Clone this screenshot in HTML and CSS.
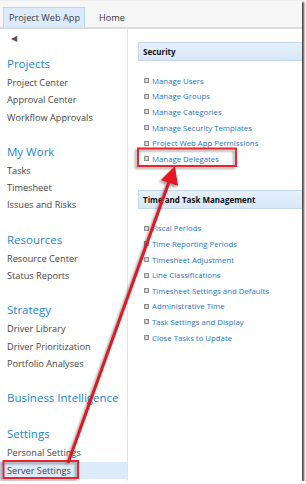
FILE: index.html
```html
<!DOCTYPE html>
<html>
<head lang="en">
	<meta charset="utf-8">
	<title>Project Web App - Server Settings</title>
	<link rel="stylesheet" href="styles.css">
</head>
<body>

	<div class="frame">
		<section class="topbar">
			<span class="tab active">Project Web App</span>
			<span class="tab">Home</span>
		</section>

		<div class="main">
			<nav class="quick">
				<div class="back">&#9664;</div>

				<div class="group">
					<p class="heading">Projects</p>
					<p class="item">Project Center</p>
					<p class="item">Approval Center</p>
					<p class="item">Workflow Approvals</p>
				</div>

				<div class="group">
					<p class="heading">My Work</p>
					<p class="item">Tasks</p>
					<p class="item">Timesheet</p>
					<p class="item">Issues and Risks</p>
				</div>

				<div class="group">
					<p class="heading">Resources</p>
					<p class="item">Resource Center</p>
					<p class="item">Status Reports</p>
				</div>

				<div class="group">
					<p class="heading">Strategy</p>
					<p class="item">Driver Library</p>
					<p class="item">Driver Prioritization</p>
					<p class="item">Portfolio Analyses</p>
				</div>

				<div class="group">
					<p class="heading">Business Intelligence</p>
				</div>

				<div class="group">
					<p class="heading">Settings</p>
					<p class="item">Personal Settings</p>
					<p class="item selected">Server Settings</p>
				</div>
			</nav>

			<section class="content">
				<div class="block">
					<h3 class="block-title">Security</h3>
					<ul class="links">
						<li><a>Manage Users</a></li>
						<li><a>Manage Groups</a></li>
						<li><a>Manage Categories</a></li>
						<li><a>Manage Security Templates</a></li>
						<li><a>Project Web App Permissions</a></li>
						<li><a>Manage Delegates</a></li>
					</ul>
				</div>

				<div class="block">
					<h3 class="block-title">Time and Task Management</h3>
					<ul class="links">
						<li><a>Fiscal Periods</a></li>
						<li><a>Time Reporting Periods</a></li>
						<li><a>Timesheet Adjustment</a></li>
						<li><a>Line Classifications</a></li>
						<li><a>Timesheet Settings and Defaults</a></li>
						<li><a>Administrative Time</a></li>
						<li><a>Task Settings and Display</a></li>
						<li><a>Close Tasks to Update</a></li>
					</ul>
				</div>
			</section>
		</div>

		<!-- callout drawn over the screenshot -->
		<svg class="callout" width="302" height="481" viewBox="0 0 302 481">
			<rect x="138" y="148.5" width="98" height="17.5" fill="none" stroke="#e8262c" stroke-width="2"/>
			<rect x="3.5" y="461" width="74.5" height="17" fill="none" stroke="#e8262c" stroke-width="2"/>
			<line x1="68" y1="463" x2="169" y2="182" stroke="#e8161e" stroke-width="3"/>
			<polygon points="175,166 178,186 161,180" fill="#e8161e"/>
		</svg>
	</div>

</body>
</html>
```

FILE: styles.css
```css
* {
	margin: 0;
	padding: 0;
}

body {
	font-family: "Open Sans", "Liberation Sans", sans-serif;
	background: #fff;
}

.frame {
	position: relative;
	width: 302px;
	height: 481px;
	overflow: hidden;
	background: #fff;
	box-shadow: 2px 2px 2px rgba(0, 0, 0, 0.75);
}

/* ribbon strip with the two tabs */
.topbar {
	display: flex;
	align-items: flex-end;
	gap: 6px;
	height: 21px;
	padding: 5px 0 0 3px;
	background: #f6f6f6;
	border-top: 1px solid #ececec;
	border-bottom: 2px solid #dcdcdc;
}

.tab {
	display: flex;
	align-items: center;
	height: 19px;
	padding: 0 8px;
	font-size: 9.2px;
	color: #3b3b3b;
}

.tab.active {
	padding: 0 4px 0 5px;
	background: #dcebfb;
	border: 1px solid #bcd7f1;
	border-bottom: none;
}

.main {
	display: flex;
	height: 454px;
}

/* left quick launch */
.quick {
	width: 127px;
	border-right: 1px solid #e3e3e3;
	padding-top: 1px;
}

.back {
	height: 24px;
	padding-left: 11px;
	font-size: 8px;
	line-height: 16px;
	color: #555;
}

.group {
	margin-bottom: 16px;
}

.heading {
	height: 20px;
	line-height: 20px;
	padding-left: 7px;
	font-size: 11.5px;
	color: #2487cf;
}

.item {
	height: 17.3px;
	line-height: 17.3px;
	padding-left: 7px;
	font-size: 9.2px;
	color: #474747;
}

.item.selected {
	background: #dceafa;
}

/* right settings page */
.content {
	flex: 1;
	padding: 13px 0 0 10px;
}

.block {
	margin-bottom: 23px;
}

.block-title {
	height: 17px;
	line-height: 17px;
	padding-left: 4px;
	font-size: 8px;
	font-weight: bold;
	color: #111;
	background: linear-gradient(#e6f0fc, #d8e7f9);
	border: 1px solid #c3d8f0;
	border-right: none;
}

.links {
	list-style: none;
	padding: 12px 0 0 6px;
}

.links li {
	display: flex;
	align-items: center;
	gap: 3px;
	height: 15.6px;
	font-size: 7.8px;
}

.links li:before {
	content: "";
	width: 3px;
	height: 3px;
	border: 1px solid #8f8f8f;
	background: #d6d6d6;
}

.links a {
	color: #1f78c6;
}

.callout {
	position: absolute;
	top: 0;
	left: 0;
	filter: drop-shadow(-2px 2px 1px rgba(0, 0, 0, 0.35));
}
```
